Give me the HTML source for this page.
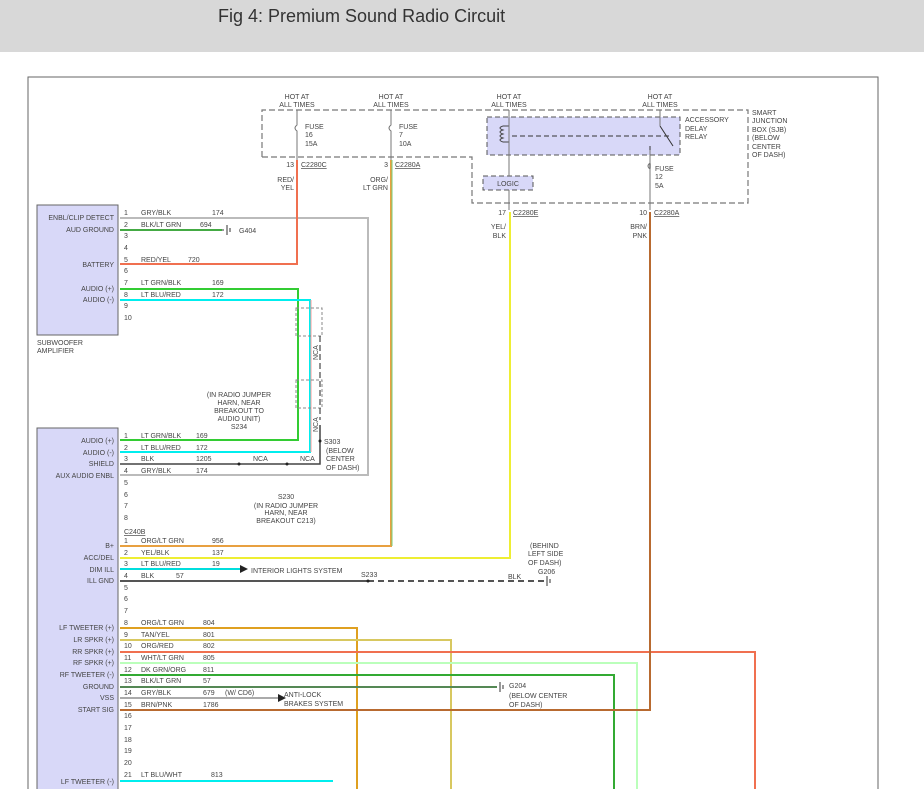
<!DOCTYPE html>
<html><head><meta charset="utf-8"><style>
html,body{margin:0;padding:0;background:#fff;width:924px;height:789px;overflow:hidden}
.hd{position:absolute;left:0;top:0;width:924px;height:52px;background:#d8d8d8}
.hd span{position:absolute;left:218px;top:6px;font:18px "Liberation Sans",sans-serif;color:#333}
svg{position:absolute;left:0;top:0}
text{font-family:"Liberation Sans",sans-serif;font-size:7px;fill:#444}
.r{text-anchor:end}.m{text-anchor:middle}
</style></head><body>
<div class="hd"><span>Fig 4: Premium Sound Radio Circuit</span></div>
<svg width="924" height="789" viewBox="0 0 924 789">
<g fill="none" stroke="#666" stroke-width="1">
<path d="M28 789V77H878V789"/>
</g>
<!-- SJB dashed -->
<g fill="none" stroke="#777" stroke-width="1.2" stroke-dasharray="6,3">
<path d="M262 157V110H748V203H472V157H262"/>
</g>
<rect x="487" y="117" width="193" height="38" fill="#d8d8f8" stroke="#555" stroke-dasharray="5,3"/>
<rect x="483" y="176" width="50" height="14" fill="#d8d8f8" stroke="#555" stroke-dasharray="5,3"/>
<path d="M512 136H670" stroke="#333" stroke-dasharray="5,3" fill="none"/>
<path d="M503 126q-6 2 0 4q-6 2 0 4q-6 2 0 4q-6 2 0 4M503 126h6M503 142h6" stroke="#444" fill="none"/>
<path d="M660 126L673 146M650 146V190" stroke="#333" fill="none"/>
<text x="508" y="186" class="m">LOGIC</text>
<!-- fuse lines -->
<g stroke="#777" fill="none">
<path d="M297 110V125q-4 3 0 6V160M391 110V125q-4 3 0 6V160M509 110V176M509 190V210M650 150V163q-4 3 0 6V210M660 110V126"/>
</g>
<g font-size="7">
<text x="297" y="99" class="m">HOT AT</text><text x="297" y="107" class="m">ALL TIMES</text>
<text x="391" y="99" class="m">HOT AT</text><text x="391" y="107" class="m">ALL TIMES</text>
<text x="509" y="99" class="m">HOT AT</text><text x="509" y="107" class="m">ALL TIMES</text>
<text x="660" y="99" class="m">HOT AT</text><text x="660" y="107" class="m">ALL TIMES</text>
<text x="305" y="129">FUSE</text><text x="305" y="137">16</text><text x="305" y="146">15A</text>
<text x="399" y="129">FUSE</text><text x="399" y="137">7</text><text x="399" y="146">10A</text>
<text x="655" y="171">FUSE</text><text x="655" y="179">12</text><text x="655" y="188">5A</text>
<text x="685" y="122">ACCESSORY</text><text x="685" y="131">DELAY</text><text x="685" y="139">RELAY</text>
<text x="752" y="115">SMART</text><text x="752" y="123">JUNCTION</text><text x="752" y="132">BOX (SJB)</text><text x="752" y="140">(BELOW</text><text x="752" y="149">CENTER</text><text x="752" y="157">OF DASH)</text>
<text x="294" y="167" class="r">13</text><text x="301" y="167" text-decoration="underline">C2280C</text>
<text x="388" y="167" class="r">3</text><text x="395" y="167" text-decoration="underline">C2280A</text>
<text x="506" y="215" class="r">17</text><text x="513" y="215" text-decoration="underline">C2280E</text>
<text x="647" y="215" class="r">10</text><text x="654" y="215" text-decoration="underline">C2280A</text>
<text x="294" y="182" class="r">RED/</text><text x="294" y="190" class="r">YEL</text>
<text x="388" y="182" class="r">ORG/</text><text x="388" y="190" class="r">LT GRN</text>
<text x="506" y="229" class="r">YEL/</text><text x="506" y="238" class="r">BLK</text>
<text x="647" y="229" class="r">BRN/</text><text x="647" y="238" class="r">PNK</text>
</g>
<!-- boxes -->
<rect x="37" y="205" width="81" height="130" fill="#d8d8f8" stroke="#666"/>
<rect x="37" y="428" width="81" height="370" fill="#d8d8f8" stroke="#666"/>
<!-- wires -->
<g fill="none" stroke-width="2">
<path d="M120 218H368V475H120" stroke="#bbb"/>
<path d="M120 230H222" stroke="#4a4"/>
<path d="M120 264H297V160" stroke="#f07050"/>
<path d="M120 289H298V440H120" stroke="#3c3"/>
<path d="M120 300H310V452H120" stroke="#0ee"/>
<path d="M311 300V452" stroke="#f99" stroke-width="1"/>
<path d="M391 160V546H120" stroke="#e8a040"/>
<path d="M392 160V546" stroke="#7c7" stroke-width="1"/>
<path d="M120 558H510V212" stroke="#ee3"/>
<path d="M120 569H240" stroke="#0dd"/>
<path d="M120 581H368" stroke="#555"/>
<path d="M368 581H545" stroke="#555" stroke-dasharray="6,4"/>
<path d="M120 628H357V789" stroke="#dfa020"/>
<path d="M120 640H451V789" stroke="#d8c860"/>
<path d="M120 652H755V789" stroke="#f07050"/>
<path d="M120 663H637V789" stroke="#bfb"/>
<path d="M120 675H614V789" stroke="#3a3"/>
<path d="M120 687H497" stroke="#585"/>
<path d="M120 698H278" stroke="#aaa"/>
<path d="M120 710H650V212" stroke="#b86a30"/>
<path d="M120 781H333" stroke="#0ee"/>
<path d="M120 464H320V425" stroke="#444" stroke-width="1.5"/>
</g>
<path d="M240 565l8 4l-8 4zM278 694l8 4l-8 4z" fill="#222"/>
<path d="M227 225v10M230 228v4M224 230h-2" stroke="#333"/>
<path d="M500 682v10M503 685v4M547 576v10M550 579v4" stroke="#333"/>
<g stroke="#888" stroke-dasharray="3,2" fill="none"><rect x="296" y="308" width="26" height="28"/><rect x="296" y="380" width="26" height="28"/></g>
<path d="M320 336V420" stroke="#222" stroke-dasharray="6,3"/>
<circle cx="239" cy="464" r="1.5" fill="#222"/><circle cx="287" cy="464" r="1.5" fill="#222"/><circle cx="320" cy="441" r="1.5" fill="#222"/><circle cx="368" cy="581" r="1.5" fill="#222"/>
<g>
<text x="114" y="220" class="r">ENBL/CLIP DETECT</text><text x="114" y="232" class="r">AUD GROUND</text><text x="114" y="267" class="r">BATTERY</text><text x="114" y="291" class="r">AUDIO (+)</text><text x="114" y="302" class="r">AUDIO (-)</text>
<text x="37" y="345">SUBWOOFER</text><text x="37" y="353">AMPLIFIER</text>
<text x="124" y="215">1</text><text x="124" y="227">2</text><text x="124" y="238">3</text><text x="124" y="250">4</text><text x="124" y="262">5</text><text x="124" y="273">6</text><text x="124" y="285">7</text><text x="124" y="297">8</text><text x="124" y="308">9</text><text x="124" y="320">10</text>
<text x="141" y="215">GRY/BLK</text><text x="212" y="215">174</text><text x="141" y="227">BLK/LT GRN</text><text x="200" y="227">694</text><text x="239" y="233">G404</text>
<text x="141" y="262">RED/YEL</text><text x="188" y="262">720</text><text x="141" y="285">LT GRN/BLK</text><text x="212" y="285">169</text><text x="141" y="297">LT BLU/RED</text><text x="212" y="297">172</text>
<text x="114" y="443" class="r">AUDIO (+)</text><text x="114" y="455" class="r">AUDIO (-)</text><text x="114" y="466" class="r">SHIELD</text><text x="114" y="478" class="r">AUX AUDIO ENBL</text>
<text x="124" y="438">1</text><text x="124" y="450">2</text><text x="124" y="461">3</text><text x="124" y="473">4</text><text x="124" y="485">5</text><text x="124" y="497">6</text><text x="124" y="508">7</text><text x="124" y="520">8</text>
<text x="141" y="438">LT GRN/BLK</text><text x="196" y="438">169</text><text x="141" y="450">LT BLU/RED</text><text x="196" y="450">172</text><text x="141" y="461">BLK</text><text x="196" y="461">1205</text><text x="141" y="473">GRY/BLK</text><text x="196" y="473">174</text>
<text x="239" y="397" class="m">(IN RADIO JUMPER</text><text x="239" y="405" class="m">HARN, NEAR</text><text x="239" y="413" class="m">BREAKOUT TO</text><text x="239" y="421" class="m">AUDIO UNIT)</text><text x="239" y="429" class="m">S234</text>
<text x="253" y="461">NCA</text><text x="300" y="461">NCA</text><text x="324" y="444">S303</text><text x="326" y="453">(BELOW</text><text x="326" y="461">CENTER</text><text x="326" y="470">OF DASH)</text>
<text x="286" y="499" class="m">S230</text><text x="286" y="508" class="m">(IN RADIO JUMPER</text><text x="286" y="515" class="m">HARN, NEAR</text><text x="286" y="523" class="m">BREAKOUT C213)</text>
<text x="124" y="534" text-decoration="underline">C240B</text>
<text x="114" y="548" class="r">B+</text><text x="114" y="560" class="r">ACC/DEL</text><text x="114" y="572" class="r">DIM ILL</text><text x="114" y="583" class="r">ILL GND</text>
<text x="124" y="543">1</text><text x="124" y="555">2</text><text x="124" y="566">3</text><text x="124" y="578">4</text>
<text x="141" y="543">ORG/LT GRN</text><text x="212" y="543">956</text><text x="141" y="555">YEL/BLK</text><text x="212" y="555">137</text><text x="141" y="566">LT BLU/RED</text><text x="212" y="566">19</text><text x="141" y="578">BLK</text><text x="176" y="578">57</text>
<text x="251" y="573">INTERIOR LIGHTS SYSTEM</text><text x="361" y="577">S233</text><text x="508" y="579">BLK</text>
<text x="530" y="548">(BEHIND</text><text x="528" y="556">LEFT SIDE</text><text x="528" y="565">OF DASH)</text><text x="538" y="574">G206</text>
<text x="124" y="590">5</text><text x="124" y="601">6</text><text x="124" y="613">7</text>
<text x="114" y="630" class="r">LF TWEETER (+)</text><text x="114" y="642" class="r">LR SPKR (+)</text><text x="114" y="654" class="r">RR SPKR (+)</text><text x="114" y="665" class="r">RF SPKR (+)</text><text x="114" y="677" class="r">RF TWEETER (-)</text><text x="114" y="689" class="r">GROUND</text><text x="114" y="700" class="r">VSS</text><text x="114" y="712" class="r">START SIG</text>
<text x="124" y="625">8</text><text x="124" y="637">9</text><text x="124" y="648">10</text><text x="124" y="660">11</text><text x="124" y="672">12</text><text x="124" y="683">13</text><text x="124" y="695">14</text><text x="124" y="707">15</text><text x="124" y="718">16</text><text x="124" y="730">17</text><text x="124" y="742">18</text><text x="124" y="753">19</text><text x="124" y="765">20</text><text x="124" y="777">21</text>
<text x="141" y="625">ORG/LT GRN</text><text x="203" y="625">804</text><text x="141" y="637">TAN/YEL</text><text x="203" y="637">801</text><text x="141" y="648">ORG/RED</text><text x="203" y="648">802</text><text x="141" y="660">WHT/LT GRN</text><text x="203" y="660">805</text><text x="141" y="672">DK GRN/ORG</text><text x="203" y="672">811</text><text x="141" y="683">BLK/LT GRN</text><text x="203" y="683">57</text><text x="141" y="695">GRY/BLK</text><text x="203" y="695">679</text><text x="225" y="695">(W/ CD6)</text><text x="141" y="707">BRN/PNK</text><text x="203" y="707">1786</text><text x="141" y="777">LT BLU/WHT</text><text x="211" y="777">813</text>
<text x="284" y="697">ANTI-LOCK</text><text x="284" y="706">BRAKES SYSTEM</text>
<text x="509" y="688">G204</text><text x="509" y="698">(BELOW CENTER</text><text x="509" y="707">OF DASH)</text>
<text x="114" y="784" class="r">LF TWEETER (-)</text>
<text x="318" y="360" transform="rotate(-90 318 360)">NCA</text><text x="318" y="432" transform="rotate(-90 318 432)">NCA</text>
</g>
</svg>
</body></html>
